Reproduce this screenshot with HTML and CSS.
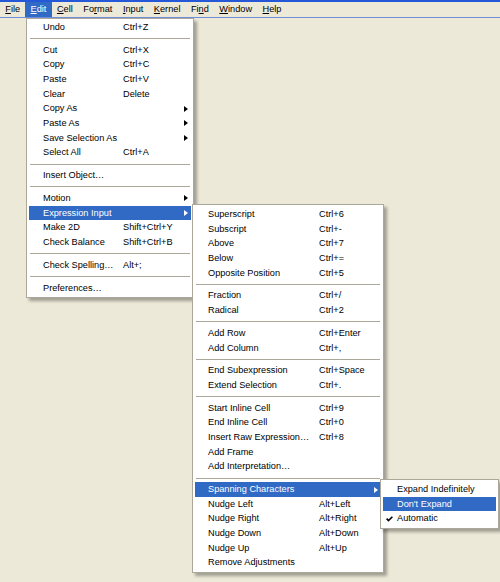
FILE: index.html
```html
<!DOCTYPE html>
<html>
<head>
<meta charset="utf-8">
<link rel="stylesheet" href="styles.css">
</head>
<body>
<div class="menubar">
  <span class="mb-item"><u>F</u>ile</span>
  <span class="mb-item active"><u>E</u>dit</span>
  <span class="mb-item"><u>C</u>ell</span>
  <span class="mb-item">Fo<u>r</u>mat</span>
  <span class="mb-item"><u>I</u>nput</span>
  <span class="mb-item"><u>K</u>ernel</span>
  <span class="mb-item">Fi<u>n</u>d</span>
  <span class="mb-item"><u>W</u>indow</span>
  <span class="mb-item"><u>H</u>elp</span>
</div>

<div class="menu menu-edit">
  <div class="row"><span class="label">Undo</span><span class="key">Ctrl+Z</span></div>
  <div class="sep"></div>
  <div class="row"><span class="label">Cut</span><span class="key">Ctrl+X</span></div>
  <div class="row"><span class="label">Copy</span><span class="key">Ctrl+C</span></div>
  <div class="row"><span class="label">Paste</span><span class="key">Ctrl+V</span></div>
  <div class="row"><span class="label">Clear</span><span class="key">Delete</span></div>
  <div class="row"><span class="label">Copy As</span><span class="key"></span><span class="arrow"></span></div>
  <div class="row"><span class="label">Paste As</span><span class="key"></span><span class="arrow"></span></div>
  <div class="row"><span class="label">Save Selection As</span><span class="key"></span><span class="arrow"></span></div>
  <div class="row"><span class="label">Select All</span><span class="key">Ctrl+A</span></div>
  <div class="sep"></div>
  <div class="row"><span class="label">Insert Object…</span><span class="key"></span></div>
  <div class="sep"></div>
  <div class="row"><span class="label">Motion</span><span class="key"></span><span class="arrow"></span></div>
  <div class="row hl"><span class="label">Expression Input</span><span class="key"></span><span class="arrow"></span></div>
  <div class="row"><span class="label">Make 2D</span><span class="key">Shift+Ctrl+Y</span></div>
  <div class="row"><span class="label">Check Balance</span><span class="key">Shift+Ctrl+B</span></div>
  <div class="sep"></div>
  <div class="row"><span class="label">Check Spelling…</span><span class="key">Alt+;</span></div>
  <div class="sep"></div>
  <div class="row"><span class="label">Preferences…</span><span class="key"></span></div>
</div>

<div class="menu menu-expr">
  <div class="row"><span class="label">Superscript</span><span class="key">Ctrl+6</span></div>
  <div class="row"><span class="label">Subscript</span><span class="key">Ctrl+-</span></div>
  <div class="row"><span class="label">Above</span><span class="key">Ctrl+7</span></div>
  <div class="row"><span class="label">Below</span><span class="key">Ctrl+=</span></div>
  <div class="row"><span class="label">Opposite Position</span><span class="key">Ctrl+5</span></div>
  <div class="sep"></div>
  <div class="row"><span class="label">Fraction</span><span class="key">Ctrl+/</span></div>
  <div class="row"><span class="label">Radical</span><span class="key">Ctrl+2</span></div>
  <div class="sep"></div>
  <div class="row"><span class="label">Add Row</span><span class="key">Ctrl+Enter</span></div>
  <div class="row"><span class="label">Add Column</span><span class="key">Ctrl+,</span></div>
  <div class="sep"></div>
  <div class="row"><span class="label">End Subexpression</span><span class="key">Ctrl+Space</span></div>
  <div class="row"><span class="label">Extend Selection</span><span class="key">Ctrl+.</span></div>
  <div class="sep"></div>
  <div class="row"><span class="label">Start Inline Cell</span><span class="key">Ctrl+9</span></div>
  <div class="row"><span class="label">End Inline Cell</span><span class="key">Ctrl+0</span></div>
  <div class="row"><span class="label">Insert Raw Expression…</span><span class="key">Ctrl+8</span></div>
  <div class="row"><span class="label">Add Frame</span><span class="key"></span></div>
  <div class="row"><span class="label">Add Interpretation…</span><span class="key"></span></div>
  <div class="sep"></div>
  <div class="row hl"><span class="label">Spanning Characters</span><span class="key"></span><span class="arrow"></span></div>
  <div class="row"><span class="label">Nudge Left</span><span class="key">Alt+Left</span></div>
  <div class="row"><span class="label">Nudge Right</span><span class="key">Alt+Right</span></div>
  <div class="row"><span class="label">Nudge Down</span><span class="key">Alt+Down</span></div>
  <div class="row"><span class="label">Nudge Up</span><span class="key">Alt+Up</span></div>
  <div class="row"><span class="label">Remove Adjustments</span><span class="key"></span></div>
</div>

<div class="menu menu-span">
  <div class="row"><span class="label">Expand Indefinitely</span></div>
  <div class="row hl"><span class="label">Don't Expand</span></div>
  <div class="row"><svg class="check" viewBox="0 0 7 6" width="7" height="6"><path d="M0.6 2.6 L2.5 4.6 L6.4 0.7" fill="none" stroke="#000" stroke-width="1.6"/></svg><span class="label">Automatic</span></div>
</div>
</body>
</html>
```

FILE: styles.css
```css
html, body {
  margin: 0;
  padding: 0;
}

body {
  width: 500px;
  height: 582px;
  overflow: hidden;
  position: relative;
  background: #ECE9D8;
  font-family: "Liberation Sans", Arial, sans-serif;
  font-size: 9.2px;
  color: #000;
}

.menubar {
  display: flex;
  height: 15px;
  border-top: 2px solid #2458D8;
  border-bottom: 1px solid #6C8EDB;
  background: #ECE9D8;
}

.mb-item {
  padding: 0 5.25px;
  line-height: 15px;
  white-space: nowrap;
}

.mb-item u {
  text-decoration: underline;
  text-underline-offset: 1px;
}

.mb-item.active {
  background: #316AC5;
  color: #fff;
}

.menu {
  position: absolute;
  background: #fff;
  border: 1px solid #ACA899;
  padding: 2px;
  box-shadow: 3px 3px 3px rgba(0, 0, 0, 0.32);
}

.menu-edit {
  left: 26px;
  top: 18px;
  width: 162px;
  padding-top: 1px;
}

.menu-expr {
  left: 192px;
  top: 204px;
  width: 186px;
}

.menu-span {
  left: 380px;
  top: 479px;
  width: 113px;
}

.row {
  position: relative;
  display: flex;
  align-items: center;
  height: 14.65px;
  line-height: 14.65px;
  white-space: nowrap;
}

.row.hl {
  background: #316AC5;
  color: #fff;
}

.label {
  box-sizing: border-box;
}

.menu-edit .label {
  width: 94px;
  padding-left: 14px;
}

.menu-expr .label {
  width: 124px;
  padding-left: 13px;
}

.menu-span .label {
  padding-left: 14px;
}

.key {
  flex: 1;
}

.arrow {
  width: 0;
  height: 0;
  margin-right: 3px;
  border-left: 4px solid #000;
  border-top: 3.5px solid transparent;
  border-bottom: 3.5px solid transparent;
}

.row.hl .arrow {
  border-left-color: #fff;
}

.sep {
  display: flex;
  align-items: center;
  height: 8.2px;
}

.sep::before {
  content: "";
  flex: 1;
  height: 1px;
  margin: 0 1px;
  background: #ACA899;
}

.check {
  position: absolute;
  left: 3px;
  top: 5px;
}
```
